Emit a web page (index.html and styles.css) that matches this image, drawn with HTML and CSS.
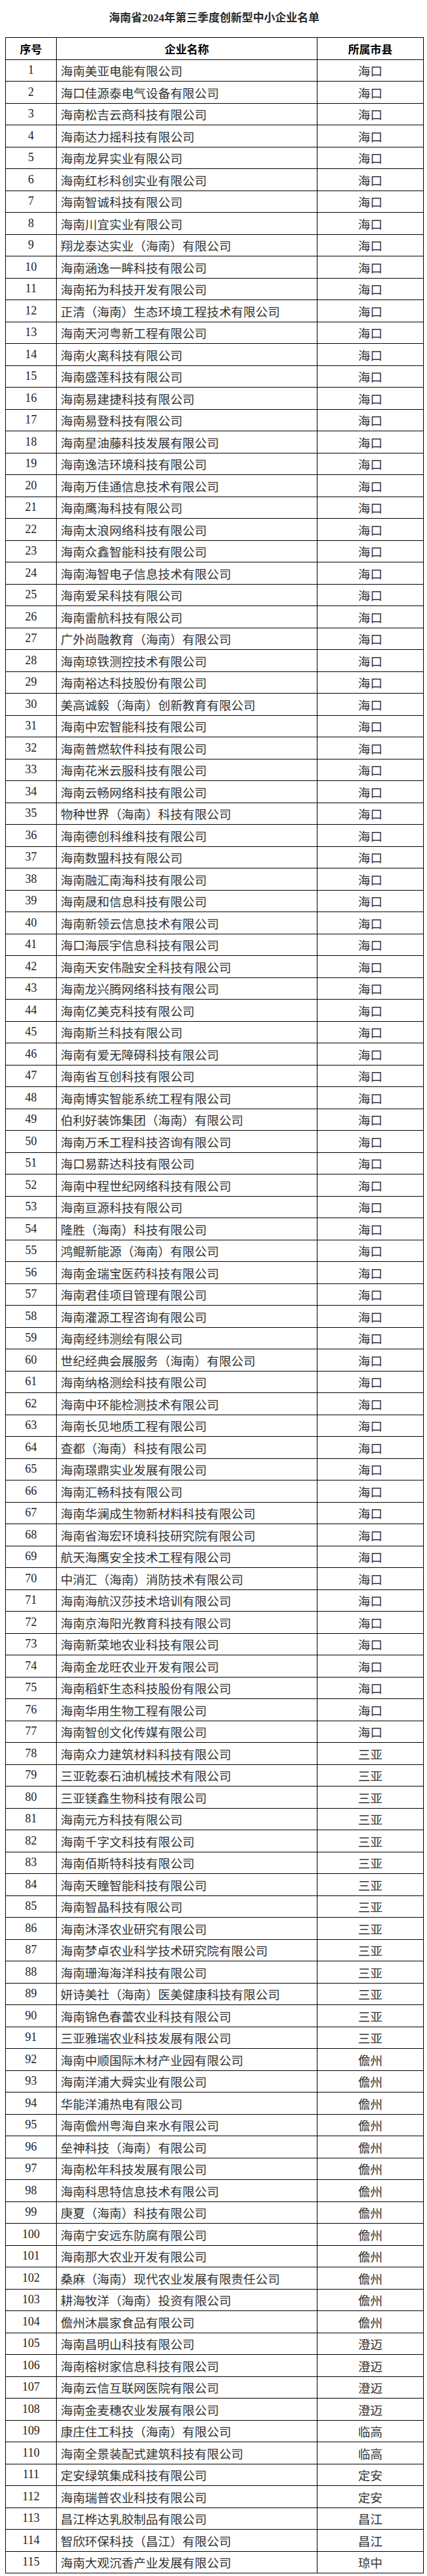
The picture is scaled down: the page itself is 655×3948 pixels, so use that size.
FILE: index.html
```html
<!DOCTYPE html>
<html lang="zh-CN">
<head>
<meta charset="utf-8">
<title>海南省2024年第三季度创新型中小企业名单</title>
<link rel="stylesheet" href="styles.css">
</head>
<body>
<div class="page">
<h1 class="title">海南省2024年第三季度创新型中小企业名单</h1>
<table class="list">
<colgroup><col class="c-no"><col class="c-name"><col class="c-city"></colgroup>
<thead>
<tr><th>序号</th><th>企业名称</th><th>所属市县</th></tr>
</thead>
<tbody>
<tr><td class="no">1</td><td class="name">海南美亚电能有限公司</td><td class="city">海口</td></tr>
<tr><td class="no">2</td><td class="name">海口佳源泰电气设备有限公司</td><td class="city">海口</td></tr>
<tr><td class="no">3</td><td class="name">海南松吉云商科技有限公司</td><td class="city">海口</td></tr>
<tr><td class="no">4</td><td class="name">海南达力摇科技有限公司</td><td class="city">海口</td></tr>
<tr><td class="no">5</td><td class="name">海南龙昇实业有限公司</td><td class="city">海口</td></tr>
<tr><td class="no">6</td><td class="name">海南红杉科创实业有限公司</td><td class="city">海口</td></tr>
<tr><td class="no">7</td><td class="name">海南智诚科技有限公司</td><td class="city">海口</td></tr>
<tr><td class="no">8</td><td class="name">海南川宜实业有限公司</td><td class="city">海口</td></tr>
<tr><td class="no">9</td><td class="name">翔龙泰达实业（海南）有限公司</td><td class="city">海口</td></tr>
<tr><td class="no">10</td><td class="name">海南涵逸一眸科技有限公司</td><td class="city">海口</td></tr>
<tr><td class="no">11</td><td class="name">海南拓为科技开发有限公司</td><td class="city">海口</td></tr>
<tr><td class="no">12</td><td class="name">正清（海南）生态环境工程技术有限公司</td><td class="city">海口</td></tr>
<tr><td class="no">13</td><td class="name">海南天河粤新工程有限公司</td><td class="city">海口</td></tr>
<tr><td class="no">14</td><td class="name">海南火离科技有限公司</td><td class="city">海口</td></tr>
<tr><td class="no">15</td><td class="name">海南盛莲科技有限公司</td><td class="city">海口</td></tr>
<tr><td class="no">16</td><td class="name">海南易建捷科技有限公司</td><td class="city">海口</td></tr>
<tr><td class="no">17</td><td class="name">海南易登科技有限公司</td><td class="city">海口</td></tr>
<tr><td class="no">18</td><td class="name">海南星油藤科技发展有限公司</td><td class="city">海口</td></tr>
<tr><td class="no">19</td><td class="name">海南逸洁环境科技有限公司</td><td class="city">海口</td></tr>
<tr><td class="no">20</td><td class="name">海南万佳通信息技术有限公司</td><td class="city">海口</td></tr>
<tr><td class="no">21</td><td class="name">海南鹰海科技有限公司</td><td class="city">海口</td></tr>
<tr><td class="no">22</td><td class="name">海南太浪网络科技有限公司</td><td class="city">海口</td></tr>
<tr><td class="no">23</td><td class="name">海南众鑫智能科技有限公司</td><td class="city">海口</td></tr>
<tr><td class="no">24</td><td class="name">海南海智电子信息技术有限公司</td><td class="city">海口</td></tr>
<tr><td class="no">25</td><td class="name">海南爱呆科技有限公司</td><td class="city">海口</td></tr>
<tr><td class="no">26</td><td class="name">海南雷航科技有限公司</td><td class="city">海口</td></tr>
<tr><td class="no">27</td><td class="name">广外尚融教育（海南）有限公司</td><td class="city">海口</td></tr>
<tr><td class="no">28</td><td class="name">海南琼铁测控技术有限公司</td><td class="city">海口</td></tr>
<tr><td class="no">29</td><td class="name">海南裕达科技股份有限公司</td><td class="city">海口</td></tr>
<tr><td class="no">30</td><td class="name">美高诚毅（海南）创新教育有限公司</td><td class="city">海口</td></tr>
<tr><td class="no">31</td><td class="name">海南中宏智能科技有限公司</td><td class="city">海口</td></tr>
<tr><td class="no">32</td><td class="name">海南普燃软件科技有限公司</td><td class="city">海口</td></tr>
<tr><td class="no">33</td><td class="name">海南花米云服科技有限公司</td><td class="city">海口</td></tr>
<tr><td class="no">34</td><td class="name">海南云畅网络科技有限公司</td><td class="city">海口</td></tr>
<tr><td class="no">35</td><td class="name">物种世界（海南）科技有限公司</td><td class="city">海口</td></tr>
<tr><td class="no">36</td><td class="name">海南德创科维科技有限公司</td><td class="city">海口</td></tr>
<tr><td class="no">37</td><td class="name">海南数盟科技有限公司</td><td class="city">海口</td></tr>
<tr><td class="no">38</td><td class="name">海南融汇南海科技有限公司</td><td class="city">海口</td></tr>
<tr><td class="no">39</td><td class="name">海南晟和信息科技有限公司</td><td class="city">海口</td></tr>
<tr><td class="no">40</td><td class="name">海南新领云信息技术有限公司</td><td class="city">海口</td></tr>
<tr><td class="no">41</td><td class="name">海口海辰宇信息科技有限公司</td><td class="city">海口</td></tr>
<tr><td class="no">42</td><td class="name">海南天安伟融安全科技有限公司</td><td class="city">海口</td></tr>
<tr><td class="no">43</td><td class="name">海南龙兴腾网络科技有限公司</td><td class="city">海口</td></tr>
<tr><td class="no">44</td><td class="name">海南亿美克科技有限公司</td><td class="city">海口</td></tr>
<tr><td class="no">45</td><td class="name">海南斯兰科技有限公司</td><td class="city">海口</td></tr>
<tr><td class="no">46</td><td class="name">海南有爱无障碍科技有限公司</td><td class="city">海口</td></tr>
<tr><td class="no">47</td><td class="name">海南省互创科技有限公司</td><td class="city">海口</td></tr>
<tr><td class="no">48</td><td class="name">海南博实智能系统工程有限公司</td><td class="city">海口</td></tr>
<tr><td class="no">49</td><td class="name">伯利好装饰集团（海南）有限公司</td><td class="city">海口</td></tr>
<tr><td class="no">50</td><td class="name">海南万禾工程科技咨询有限公司</td><td class="city">海口</td></tr>
<tr><td class="no">51</td><td class="name">海口易薪达科技有限公司</td><td class="city">海口</td></tr>
<tr><td class="no">52</td><td class="name">海南中程世纪网络科技有限公司</td><td class="city">海口</td></tr>
<tr><td class="no">53</td><td class="name">海南亘源科技有限公司</td><td class="city">海口</td></tr>
<tr><td class="no">54</td><td class="name">隆胜（海南）科技有限公司</td><td class="city">海口</td></tr>
<tr><td class="no">55</td><td class="name">鸿鲲新能源（海南）有限公司</td><td class="city">海口</td></tr>
<tr><td class="no">56</td><td class="name">海南金瑞宝医药科技有限公司</td><td class="city">海口</td></tr>
<tr><td class="no">57</td><td class="name">海南君佳项目管理有限公司</td><td class="city">海口</td></tr>
<tr><td class="no">58</td><td class="name">海南灌源工程咨询有限公司</td><td class="city">海口</td></tr>
<tr><td class="no">59</td><td class="name">海南经纬测绘有限公司</td><td class="city">海口</td></tr>
<tr><td class="no">60</td><td class="name">世纪经典会展服务（海南）有限公司</td><td class="city">海口</td></tr>
<tr><td class="no">61</td><td class="name">海南纳格测绘科技有限公司</td><td class="city">海口</td></tr>
<tr><td class="no">62</td><td class="name">海南中环能检测技术有限公司</td><td class="city">海口</td></tr>
<tr><td class="no">63</td><td class="name">海南长见地质工程有限公司</td><td class="city">海口</td></tr>
<tr><td class="no">64</td><td class="name">查都（海南）科技有限公司</td><td class="city">海口</td></tr>
<tr><td class="no">65</td><td class="name">海南璟鼎实业发展有限公司</td><td class="city">海口</td></tr>
<tr><td class="no">66</td><td class="name">海南汇畅科技有限公司</td><td class="city">海口</td></tr>
<tr><td class="no">67</td><td class="name">海南华澜成生物新材料科技有限公司</td><td class="city">海口</td></tr>
<tr><td class="no">68</td><td class="name">海南省海宏环境科技研究院有限公司</td><td class="city">海口</td></tr>
<tr><td class="no">69</td><td class="name">航天海鹰安全技术工程有限公司</td><td class="city">海口</td></tr>
<tr><td class="no">70</td><td class="name">中消汇（海南）消防技术有限公司</td><td class="city">海口</td></tr>
<tr><td class="no">71</td><td class="name">海南海航汉莎技术培训有限公司</td><td class="city">海口</td></tr>
<tr><td class="no">72</td><td class="name">海南京海阳光教育科技有限公司</td><td class="city">海口</td></tr>
<tr><td class="no">73</td><td class="name">海南新菜地农业科技有限公司</td><td class="city">海口</td></tr>
<tr><td class="no">74</td><td class="name">海南金龙旺农业开发有限公司</td><td class="city">海口</td></tr>
<tr><td class="no">75</td><td class="name">海南稻虾生态科技股份有限公司</td><td class="city">海口</td></tr>
<tr><td class="no">76</td><td class="name">海南华用生物工程有限公司</td><td class="city">海口</td></tr>
<tr><td class="no">77</td><td class="name">海南智创文化传媒有限公司</td><td class="city">海口</td></tr>
<tr><td class="no">78</td><td class="name">海南众力建筑材料科技有限公司</td><td class="city">三亚</td></tr>
<tr><td class="no">79</td><td class="name">三亚乾泰石油机械技术有限公司</td><td class="city">三亚</td></tr>
<tr><td class="no">80</td><td class="name">三亚镁鑫生物科技有限公司</td><td class="city">三亚</td></tr>
<tr><td class="no">81</td><td class="name">海南元方科技有限公司</td><td class="city">三亚</td></tr>
<tr><td class="no">82</td><td class="name">海南千字文科技有限公司</td><td class="city">三亚</td></tr>
<tr><td class="no">83</td><td class="name">海南佰斯特科技有限公司</td><td class="city">三亚</td></tr>
<tr><td class="no">84</td><td class="name">海南天瞳智能科技有限公司</td><td class="city">三亚</td></tr>
<tr><td class="no">85</td><td class="name">海南智晶科技有限公司</td><td class="city">三亚</td></tr>
<tr><td class="no">86</td><td class="name">海南沐泽农业研究有限公司</td><td class="city">三亚</td></tr>
<tr><td class="no">87</td><td class="name">海南梦卓农业科学技术研究院有限公司</td><td class="city">三亚</td></tr>
<tr><td class="no">88</td><td class="name">海南珊海海洋科技有限公司</td><td class="city">三亚</td></tr>
<tr><td class="no">89</td><td class="name">妍诗美社（海南）医美健康科技有限公司</td><td class="city">三亚</td></tr>
<tr><td class="no">90</td><td class="name">海南锦色春蕾农业科技有限公司</td><td class="city">三亚</td></tr>
<tr><td class="no">91</td><td class="name">三亚雅瑞农业科技发展有限公司</td><td class="city">三亚</td></tr>
<tr><td class="no">92</td><td class="name">海南中顺国际木材产业园有限公司</td><td class="city">儋州</td></tr>
<tr><td class="no">93</td><td class="name">海南洋浦大舜实业有限公司</td><td class="city">儋州</td></tr>
<tr><td class="no">94</td><td class="name">华能洋浦热电有限公司</td><td class="city">儋州</td></tr>
<tr><td class="no">95</td><td class="name">海南儋州粤海自来水有限公司</td><td class="city">儋州</td></tr>
<tr><td class="no">96</td><td class="name">垒神科技（海南）有限公司</td><td class="city">儋州</td></tr>
<tr><td class="no">97</td><td class="name">海南松年科技发展有限公司</td><td class="city">儋州</td></tr>
<tr><td class="no">98</td><td class="name">海南科思特信息技术有限公司</td><td class="city">儋州</td></tr>
<tr><td class="no">99</td><td class="name">庚夏（海南）科技有限公司</td><td class="city">儋州</td></tr>
<tr><td class="no">100</td><td class="name">海南宁安远东防腐有限公司</td><td class="city">儋州</td></tr>
<tr><td class="no">101</td><td class="name">海南那大农业开发有限公司</td><td class="city">儋州</td></tr>
<tr><td class="no">102</td><td class="name">桑麻（海南）现代农业发展有限责任公司</td><td class="city">儋州</td></tr>
<tr><td class="no">103</td><td class="name">耕海牧洋（海南）投资有限公司</td><td class="city">儋州</td></tr>
<tr><td class="no">104</td><td class="name">儋州沐晨家食品有限公司</td><td class="city">儋州</td></tr>
<tr><td class="no">105</td><td class="name">海南昌明山科技有限公司</td><td class="city">澄迈</td></tr>
<tr><td class="no">106</td><td class="name">海南榕树家信息科技有限公司</td><td class="city">澄迈</td></tr>
<tr><td class="no">107</td><td class="name">海南云信互联网医院有限公司</td><td class="city">澄迈</td></tr>
<tr><td class="no">108</td><td class="name">海南金麦穗农业发展有限公司</td><td class="city">澄迈</td></tr>
<tr><td class="no">109</td><td class="name">康庄住工科技（海南）有限公司</td><td class="city">临高</td></tr>
<tr><td class="no">110</td><td class="name">海南全景装配式建筑科技有限公司</td><td class="city">临高</td></tr>
<tr><td class="no">111</td><td class="name">定安绿筑集成科技有限公司</td><td class="city">定安</td></tr>
<tr><td class="no">112</td><td class="name">海南瑞普农业科技有限公司</td><td class="city">定安</td></tr>
<tr><td class="no">113</td><td class="name">昌江桦达乳胶制品有限公司</td><td class="city">昌江</td></tr>
<tr><td class="no">114</td><td class="name">智欣环保科技（昌江）有限公司</td><td class="city">昌江</td></tr>
<tr><td class="no">115</td><td class="name">海南大观沉香产业发展有限公司</td><td class="city">琼中</td></tr>
</tbody>
</table>
</div>
</body>
</html>
```

FILE: styles.css
```css
html, body {
  margin: 0;
  padding: 0;
  background: #ffffff;
}

.page {
  padding: 0 6px 0 8px;
  font-family: "Liberation Serif", "Noto Sans CJK SC", serif;
  color: #111;
}

.title {
  margin: 0;
  padding-top: 16px;
  height: 41px;
  line-height: 24px;
  font-size: 17px;
  font-weight: 600;
  text-align: center;
  color: #2a2a2a;
  font-family: "Liberation Serif", "Noto Sans CJK SC", serif;
}

.list {
  width: 641px;
  border-collapse: collapse;
  table-layout: fixed;
}

.c-no { width: 78px; }
.c-name { width: 400px; }
.c-city { width: 163px; }

.list th,
.list td {
  border: 1px solid #000;
  padding: 0;
  height: 32.5px;
  vertical-align: middle;
  white-space: nowrap;
}

.list th {
  font-size: 17px;
  font-weight: 700;
  text-align: center;
  color: #000;
}

.list td {
  font-size: 18.7px;
  font-weight: 400;
  color: #333;
}

.list td.no {
  text-align: center;
  font-size: 18px;
  color: #222;
}

.list td.name {
  text-align: left;
  padding-left: 6px;
}

.list td.city {
  text-align: center;
}
```
